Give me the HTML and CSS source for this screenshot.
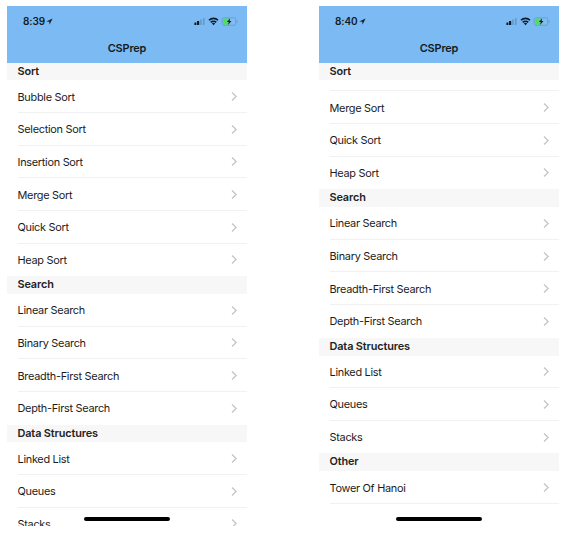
FILE: index.html
```
<!DOCTYPE html>
<html lang="en">
<head>
<meta charset="utf-8">
<title>CSPrep</title>
<link rel="stylesheet" href="styles.css">
</head>
<body>
<svg class="defs" width="0" height="0" aria-hidden="true">
  <symbol id="chevron" viewBox="0 0 6 9"><path d="M1 .5 5.1 4.5 1 8.5" fill="none" stroke="#c4c4c8" stroke-width="1.3"/></symbol>
  <symbol id="location" viewBox="0 0 7 7"><path d="M6.6 .4 .3 3.5l3 .3.2 3z" fill="#142231"/></symbol>
  <symbol id="status" viewBox="0 0 44 9">
    <rect x="0.4" y="5.4" width="2" height="2.6" rx=".3" fill="#101a24"/>
    <rect x="3" y="4" width="2.2" height="4" rx=".3" fill="#101a24"/>
    <rect x="6" y="2.5" width="1.8" height="5.5" rx=".3" fill="#659dcd"/>
    <rect x="8.9" y="1" width="1.8" height="7" rx=".3" fill="#659dcd"/>
    <g fill="none" stroke="#101a24" stroke-width="1.6">
      <path d="M15 3.3a6.3 6.3 0 0 1 9 0"/>
      <path d="M16.8 5.4a3.8 3.8 0 0 1 5.4 0"/>
    </g>
    <path d="M19.5 8.3l-1.6-1.7a2.2 2.2 0 0 1 3.2 0z" fill="#101a24"/>
    <rect x="28.1" y=".9" width="13.6" height="7.4" rx="1.9" fill="#82bdec" stroke="#609bcf" stroke-width=".8"/>
    <path d="M30.2 1.5h4.4v6.2h-4.4a1.2 1.2 0 0 1-1.2-1.2v-3.800a1.2 1.2 0 0 1 1.2-1.2z" fill="#4fdc67"/>
    <path d="M36.1 1.3 33 5.1h1.8l-.8 2.8 3.5-4h-1.900z" fill="#101a24"/>
    <path d="M42.5 3.3q1.200.3 1.200 1.300t-1.200 1.300z" fill="#609bcf"/>
  </symbol>
</svg>
<main class="screens">
  <section class="phone">
    <header class="bar">
      <div class="status"><span class="time">8:39</span><svg class="loc"><use href="#location"/></svg><svg class="indicators"><use href="#status"/></svg></div>
      <h1>CSPrep</h1>
    </header>
    <h2>Sort</h2>
    <ul>
      <li><span>Bubble Sort</span><svg><use href="#chevron"/></svg></li>
      <li><span>Selection Sort</span><svg><use href="#chevron"/></svg></li>
      <li><span>Insertion Sort</span><svg><use href="#chevron"/></svg></li>
      <li><span>Merge Sort</span><svg><use href="#chevron"/></svg></li>
      <li><span>Quick Sort</span><svg><use href="#chevron"/></svg></li>
      <li><span>Heap Sort</span><svg><use href="#chevron"/></svg></li>
    </ul>
    <h2>Search</h2>
    <ul>
      <li><span>Linear Search</span><svg><use href="#chevron"/></svg></li>
      <li><span>Binary Search</span><svg><use href="#chevron"/></svg></li>
      <li><span>Breadth-First Search</span><svg><use href="#chevron"/></svg></li>
      <li><span>Depth-First Search</span><svg><use href="#chevron"/></svg></li>
    </ul>
    <h2>Data Structures</h2>
    <ul>
      <li><span>Linked List</span><svg><use href="#chevron"/></svg></li>
      <li><span>Queues</span><svg><use href="#chevron"/></svg></li>
      <li><span>Stacks</span><svg><use href="#chevron"/></svg></li>
    </ul>
    <div class="home"></div>
  </section>
  <section class="phone">
    <header class="bar">
      <div class="status"><span class="time">8:40</span><svg class="loc"><use href="#location"/></svg><svg class="indicators"><use href="#status"/></svg></div>
      <h1>CSPrep</h1>
    </header>
    <h2>Sort</h2>
    <ul>
      <li class="partial"></li>
      <li><span>Merge Sort</span><svg><use href="#chevron"/></svg></li>
      <li><span>Quick Sort</span><svg><use href="#chevron"/></svg></li>
      <li><span>Heap Sort</span><svg><use href="#chevron"/></svg></li>
    </ul>
    <h2>Search</h2>
    <ul>
      <li><span>Linear Search</span><svg><use href="#chevron"/></svg></li>
      <li><span>Binary Search</span><svg><use href="#chevron"/></svg></li>
      <li><span>Breadth-First Search</span><svg><use href="#chevron"/></svg></li>
      <li><span>Depth-First Search</span><svg><use href="#chevron"/></svg></li>
    </ul>
    <h2>Data Structures</h2>
    <ul>
      <li><span>Linked List</span><svg><use href="#chevron"/></svg></li>
      <li><span>Queues</span><svg><use href="#chevron"/></svg></li>
      <li><span>Stacks</span><svg><use href="#chevron"/></svg></li>
    </ul>
    <h2>Other</h2>
    <ul class="end">
      <li><span>Tower Of Hanoi</span><svg><use href="#chevron"/></svg></li>
    </ul>
    <div class="home"></div>
  </section>
</main>
</body>
</html>
```
FILE: styles.css
```
* { box-sizing: border-box; margin: 0; padding: 0; }
body {
  background: #fff;
  color: #1c1c1c;
  font-family: Inter, "Liberation Sans", sans-serif;
  overflow: hidden;
}
.defs { position: absolute; }
.screens { display: flex; gap: 72px; padding: 6px 7px; }
.phone {
  position: relative;
  width: 240px;
  height: 520px;
  overflow: hidden;
  background: #fff;
}
.bar { height: 56.5px; background: #7bbaf3; color: #111b25; }
.status { display: flex; align-items: center; height: 30px; padding: 0 9px 0 16px; }
.time { font-size: 10px; font-weight: 600; letter-spacing: -.1px; line-height: 14px; }
.loc { width: 7px; height: 7px; margin: 1px 0 0 1.5px; }
.indicators { width: 44px; height: 9px; margin-left: auto; }
h1 {
  padding-top: 5px;
  font-size: 10.9px;
  font-weight: 600;
  letter-spacing: -.15px;
  line-height: 14px;
  text-align: center;
}
h2 {
  height: 17.9px;
  padding-left: 10.5px;
  background: #f7f7f7;
  color: #222;
  font-size: 10.9px;
  font-weight: 600;
  letter-spacing: -.13px;
  line-height: 17.5px;
}
ul { list-style: none; }
li {
  display: flex;
  align-items: center;
  justify-content: space-between;
  height: 32.64px;
  margin-left: 10.5px;
  padding: 1px 10px 0 0;
  border-bottom: 1px solid #f1f1f1;
  font-size: 10.9px;
  line-height: 16px;
  letter-spacing: -.28px;
}
li:last-child { border-bottom-color: transparent; }
.end li { border-bottom-color: #f1f1f1; }
.partial { height: 11px; }
li svg { width: 6px; height: 9px; }
.home {
  position: absolute;
  left: 77px;
  bottom: 5px;
  width: 86px;
  height: 4px;
  border-radius: 2px;
  background: #000;
}
```
